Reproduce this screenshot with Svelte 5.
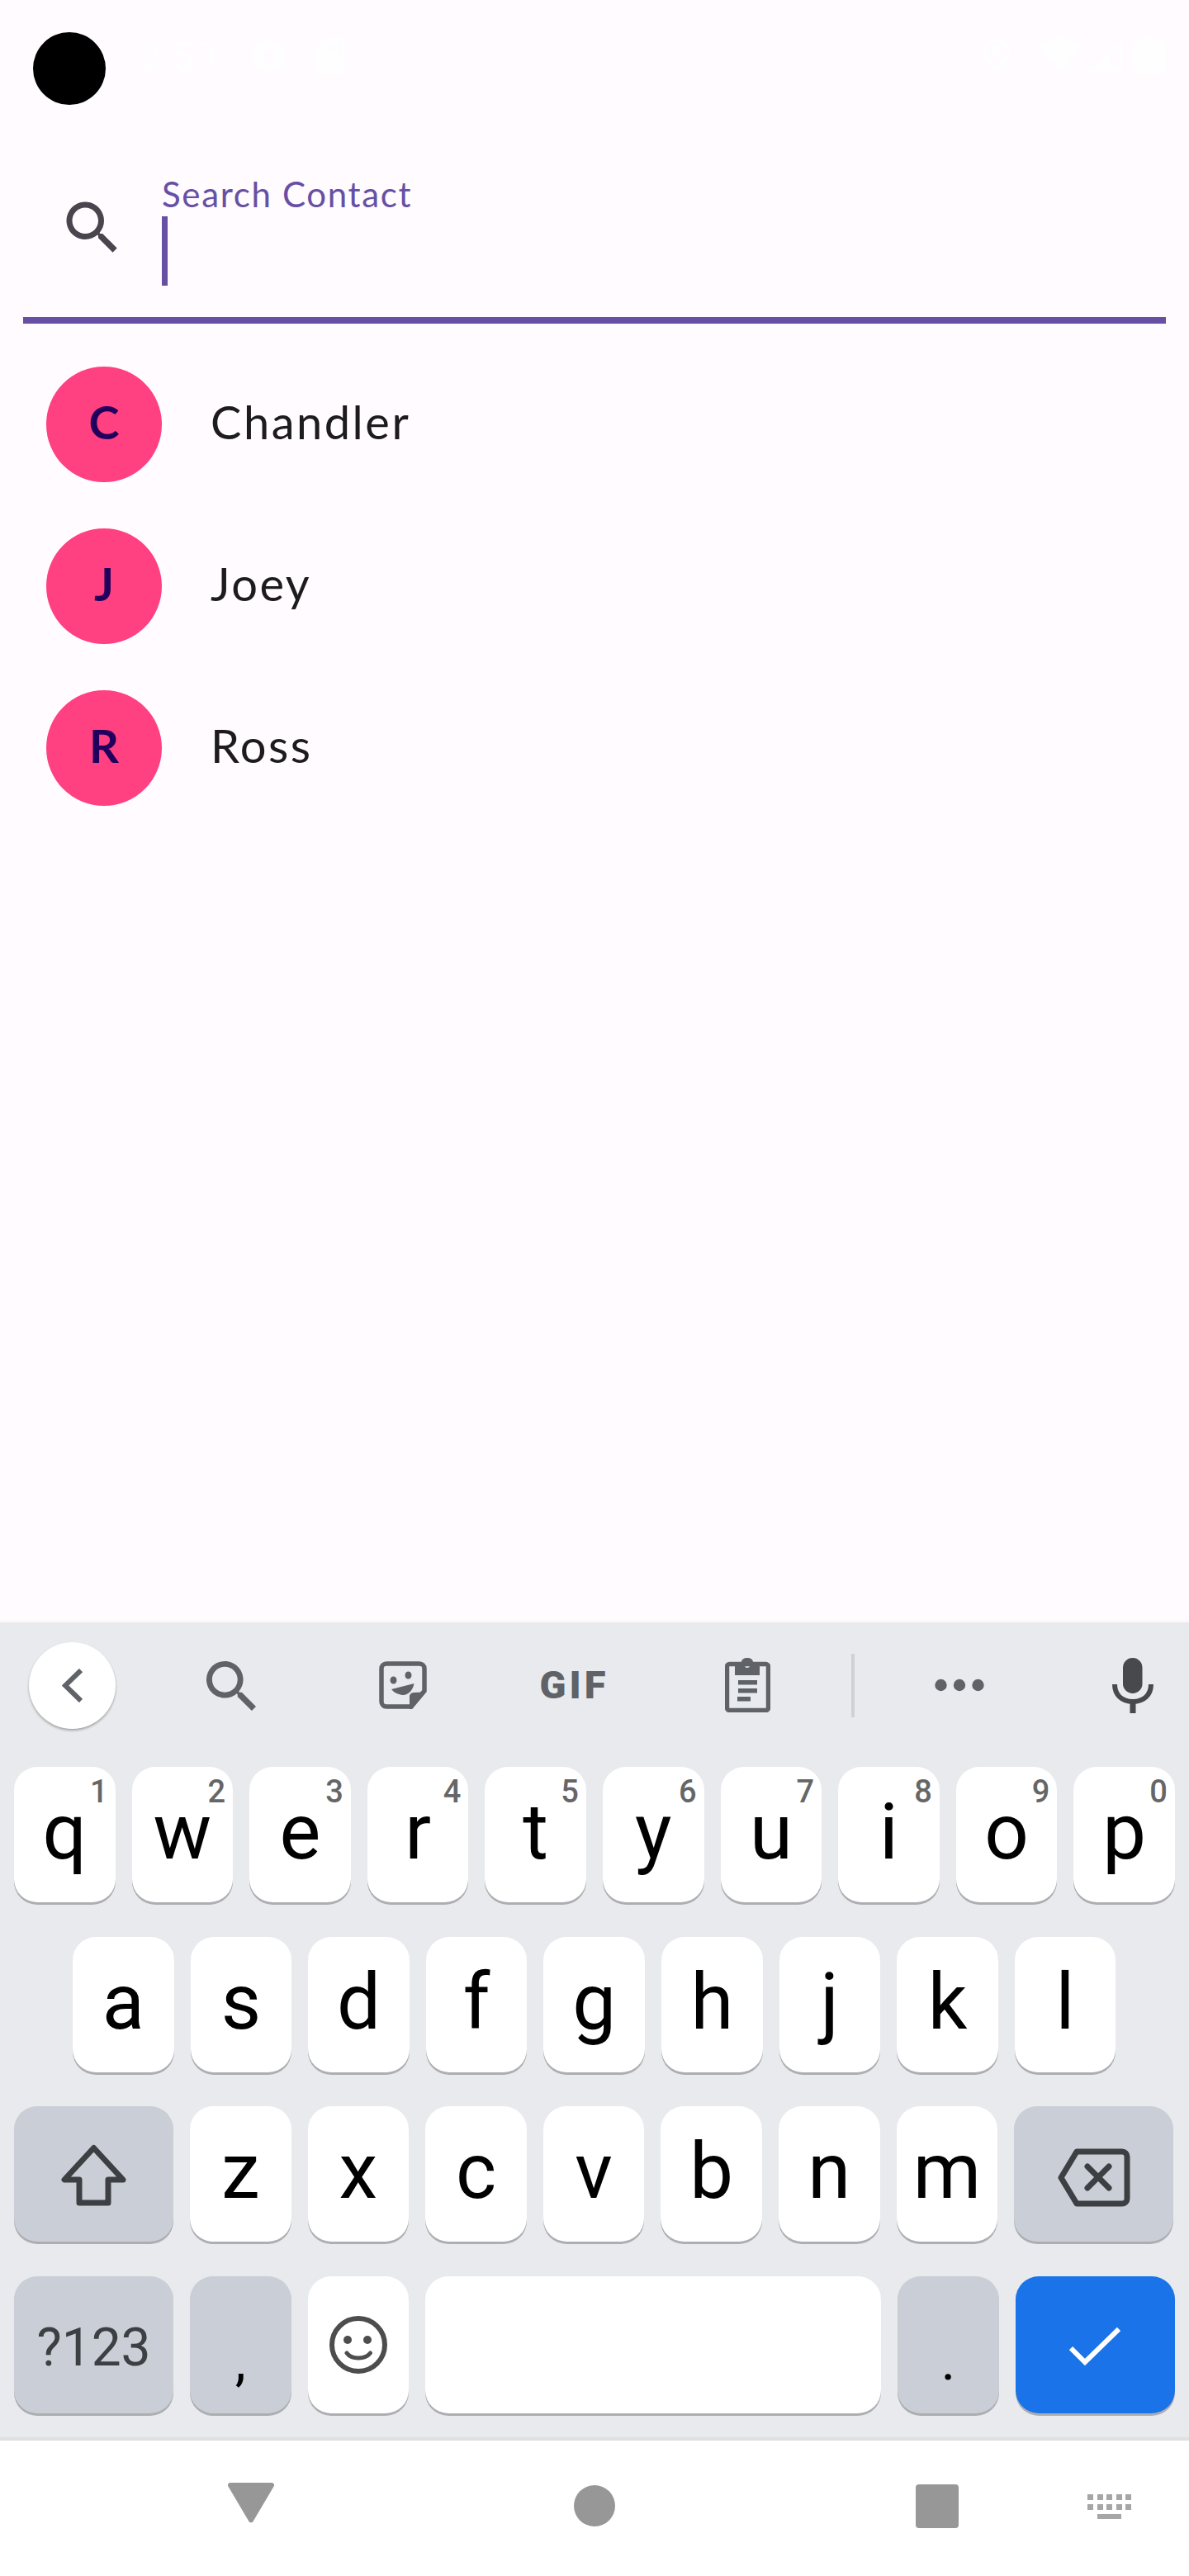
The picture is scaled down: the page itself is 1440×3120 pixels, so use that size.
<script>
  const contacts = [
    { initial: 'C', name: 'Chandler' },
    { initial: 'J', name: 'Joey' },
    { initial: 'R', name: 'Ross' }
  ];
  const row1 = [['q','1'],['w','2'],['e','3'],['r','4'],['t','5'],['y','6'],['u','7'],['i','8'],['o','9'],['p','0']];
  const row2 = ['a','s','d','f','g','h','j','k','l'];
  const row3 = ['z','x','c','v','b','n','m'];
  const searchPath = 'M15.5 14h-.79l-.28-.27C15.41 12.59 16 11.11 16 9.5 16 5.91 13.09 3 9.5 3S3 5.91 3 9.5 5.91 16 9.5 16c1.61 0 3.09-.59 4.23-1.57l.27.28v.79l5 4.99L20.49 19l-4.99-5zm-6 0C7.01 14 5 11.99 5 9.5S7.01 5 9.5 5 14 7.01 14 9.5 11.99 14 9.5 14z';
  const gearPath = 'M19.14 12.94c.04-.3.06-.61.06-.94 0-.32-.02-.64-.07-.94l2.03-1.58c.18-.14.23-.41.12-.61l-1.92-3.32c-.12-.22-.37-.29-.59-.22l-2.39.96c-.5-.38-1.03-.7-1.62-.94l-.36-2.54c-.04-.24-.24-.41-.48-.41h-3.84c-.24 0-.43.17-.47.41l-.36 2.54c-.59.24-1.13.57-1.62.94l-2.39-.96c-.22-.08-.47 0-.59.22L2.74 8.87c-.12.21-.08.47.12.61l2.03 1.58c-.05.3-.09.63-.09.94s.02.64.07.94l-2.03 1.58c-.18.14-.23.41-.12.61l1.92 3.32c.12.22.37.29.59.22l2.39-.96c.5.38 1.03.7 1.62.94l.36 2.54c.05.24.24.41.48.41h3.84c.24 0 .44-.17.47-.41l.36-2.54c.59-.24 1.13-.56 1.62-.94l2.39.96c.22.08.47 0 .59-.22l1.92-3.32c.12-.22.07-.47-.12-.61l-2.01-1.58zM12 15.6c-1.98 0-3.6-1.62-3.6-3.6s1.62-3.6 3.6-3.6 3.6 1.62 3.6 3.6-1.62 3.6-3.6 3.6z';
</script>

<div class="screen">
  <div class="camera"></div>

  <header class="status">
    <span class="time">2:53</span>
    <svg class="st-gear" viewBox="2.5 2 19 20"><path d={gearPath} /></svg>
    <svg class="st-sd" viewBox="0 0 35 44"><path fill-rule="evenodd" d="M14 0H31a4 4 0 0 1 4 4V40a4 4 0 0 1-4 4H4a4 4 0 0 1-4-4V14zM13 7h3v10h-3zM20 7h3v10h-3zM27 7h3v10h-3z" /></svg>
    <span class="st-space"></span>
    <svg class="st-loc" viewBox="0 0 32 40"><path fill-rule="evenodd" d="M16 0C7 0 0 7 0 15c0 9 10 20 16 25 6-5 16-16 16-25C32 7 25 0 16 0zM16 4c6 0 12 5 12 11 0 6-7 14-12 19C11 29 4 21 4 15 4 9 10 4 16 4zM16 9a6 6 0 1 0 0 12 6 6 0 0 0 0-12z" /></svg>
    <svg class="st-wifi" viewBox="0 0 52 43"><path d="M26 0C16 0 7 4 0 11L26 43 52 11C45 4 36 0 26 0z" /></svg>
    <svg class="st-signal" viewBox="0 0 43 42"><path fill-rule="evenodd" d="M43 0V42H0zM39 10 29 21V38H39z" /></svg>
    <svg class="st-battery" viewBox="0 0 40 45"><path d="M12 0H28V4H36a4 4 0 0 1 4 4V41a4 4 0 0 1-4 4H4a4 4 0 0 1-4-4V8a4 4 0 0 1 4-4H12z" /></svg>
  </header>

  <section class="field">
    <svg class="field-icon" viewBox="0 0 24 24"><path d={searchPath} /></svg>
    <div class="field-body">
      <span class="field-label">Search Contact</span>
      <span class="caret"></span>
    </div>
  </section>

  <ul class="list">
    {#each contacts as c}
      <li class="contact">
        <span class="avatar">{c.initial}</span>
        <span class="name">{c.name}</span>
      </li>
    {/each}
  </ul>

  <div class="spacer"></div>

  <section class="keyboard">
    <div class="toolbar">
      <button class="back" aria-label="back">
        <svg viewBox="0 0 26 41"><path d="M23 2 4 20.5 23 39" /></svg>
      </button>
      <svg class="t-search" viewBox="3 3 17.49 17.49"><path d={searchPath} /></svg>
      <svg class="t-sticker" viewBox="0 0 58 58">
        <path class="ol" d="M9 3H49a6 6 0 0 1 6 6V36L39 55H9a6 6 0 0 1-6-6V9a6 6 0 0 1 6-6z" />
        <path d="M57 37 40 58H37V44a5 5 0 0 1 5-6z" />
        <ellipse cx="17.5" cy="23" rx="4" ry="4.5" />
        <ellipse cx="35.5" cy="17" rx="4" ry="4.5" />
        <path d="M15 34 42.5 27C41 36 34 42 28 41 23 40 18 38 15 34z" />
      </svg>
      <span class="t-gif">GIF</span>
      <svg class="t-clip" viewBox="0 0 55 66">
        <rect class="ol" x="2.5" y="7.5" width="50" height="56" rx="3" />
        <path fill-rule="evenodd" d="M12 5H20C20 2 23 0 27 0s7 2 7 5H42V21H12zM27 6a3 3 0 1 0 0 6 3 3 0 0 0 0-6z" />
        <rect x="16" y="27" width="23" height="5.5" />
        <rect x="16" y="37" width="23" height="5.5" />
        <rect x="15" y="47" width="16" height="5.5" />
      </svg>
      <span class="t-div"></span>
      <svg class="t-dots" viewBox="0 0 60 16"><circle cx="7.5" cy="8" r="7.2" /><circle cx="30" cy="8" r="7.2" /><circle cx="52.5" cy="8" r="7.2" /></svg>
      <svg class="t-mic" viewBox="0 0 50 67">
        <rect x="13" y="0" width="23.5" height="43" rx="11.7" />
        <path class="ol" d="M3 32C3 45 12 53 25 53S47 45 47 32" />
        <rect x="21.5" y="52" width="7" height="15" />
      </svg>
    </div>

    <div class="rows">
      <div class="row">
        {#each row1 as [l, n]}
          <div class="key">{l}<span class="hint">{n}</span></div>
        {/each}
      </div>
      <div class="row row-inset">
        {#each row2 as l}
          <div class="key">{l}</div>
        {/each}
      </div>
      <div class="row">
        <div class="key wide fn">
          <svg class="i-shift" viewBox="0 0 79 76"><path d="M39.5 5.5 4 44H22V72H57V44H75z" /></svg>
        </div>
        {#each row3 as l}
          <div class="key">{l}</div>
        {/each}
        <div class="key wide fn">
          <svg class="i-back" viewBox="0 0 88 71">
            <path d="M23 4H78a6 6 0 0 1 6 6V61a6 6 0 0 1-6 6H23L4 35.500z" />
            <path class="x" d="M36 22 62 48M62 22 36 48" />
          </svg>
        </div>
      </div>
      <div class="row row-last">
        <div class="key wide fn sym">?123</div>
        <div class="key fn punct">,</div>
        <div class="key">
          <svg class="i-emoji" viewBox="0 0 70 70">
            <circle class="ol" cx="35" cy="35" r="32" />
            <circle cx="22" cy="29" r="5" /><circle cx="46" cy="29" r="5" />
            <path class="ol2" d="M21 45C27 53 43 53 49.500 45" />
          </svg>
        </div>
        <div class="key space"></div>
        <div class="key fn punct">.</div>
        <div class="key wide enter">
          <svg class="i-check" viewBox="0 0 62 47"><path d="M2 26 19 43 60 3" /></svg>
        </div>
      </div>
    </div>
  </section>

  <nav class="nav">
    <svg class="n-back" viewBox="0 0 56 49"><path d="M3 0H53a3 3 0 0 1 2.600 4.500L30.500 47a3 3 0 0 1-5 0L.4 4.500A3 3 0 0 1 3 0z" /></svg>
    <span class="n-home"></span>
    <span class="n-recent"></span>
    <svg class="n-kbd" viewBox="0 0 53 30">
      {#each [0, 12, 23, 35, 46] as x}
        <rect x={x} y="0" width="7" height="7" />
        <rect x={x} y="12" width="7" height="7" />
      {/each}
      <rect x="12" y="24" width="29" height="6" />
    </svg>
  </nav>
</div>

<style>
  :global(body) { margin: 0; background: #fffbfe; }
  * { box-sizing: border-box; }
  .screen {
    position: relative;
    width: 1440px;
    height: 3120px;
    display: flex;
    flex-direction: column;
    background: #fffbfe;
    overflow: hidden;
    font-family: Lato, "Noto Sans", sans-serif;
  }
  .camera {
    position: absolute;
    left: 40px; top: 39px;
    width: 88px; height: 88px;
    border-radius: 50%;
    background: #000;
  }
  .status {
    height: 112px;
    flex: none;
    display: flex;
    align-items: flex-start;
    padding-left: 168px;
    color: #fefefe;
    fill: #fefefe;
  }
  .time { font: 400 49px/58px Roboto, sans-serif; margin-top: 41px; width: 90px; }
  .st-gear { width: 44px; height: 44px; margin: 46px 0 0 45px; }
  .st-sd { width: 35px; height: 44px; margin: 46px 0 0 36px; }
  .st-space { flex: 1; }
  .st-loc { width: 32px; height: 40px; margin: 47px 0 0 0; }
  .st-wifi { width: 52px; height: 43px; margin: 45px 0 0 35px; }
  .st-signal { width: 43px; height: 42px; margin: 47px 0 0 6px; }
  .st-battery { width: 40px; height: 45px; margin: 45px 28px 0 13px; }

  .field {
    height: 280px;
    flex: none;
    margin: 0 28px;
    border-bottom: 8px solid #6750a4;
    display: flex;
    align-items: flex-start;
    padding-left: 41.5px;
  }
  .field-icon { width: 84px; height: 84px; margin-top: 121.5px; fill: #49454f; flex: none; }
  .field-body { display: flex; flex-direction: column; margin-left: 42.5px; padding-top: 98px; }
  .field-label {
    font-size: 42px;
    line-height: 50px;
    letter-spacing: 1.65px;
    color: #6750a4;
  }
  .caret { width: 7px; height: 84px; background: #6750a4; margin-top: 2px; }

  .list {
    list-style: none;
    margin: 0;
    padding: 52px 0 0 56px;
    display: flex;
    flex-direction: column;
    gap: 56px;
  }
  .contact { display: flex; align-items: center; height: 140px; }
  .avatar {
    width: 140px; height: 140px;
    border-radius: 50%;
    background: #ff4081;
    color: #21005d;
    font-size: 56px;
    font-weight: 700;
    display: flex;
    align-items: center;
    justify-content: center;
    padding-bottom: 8px;
  }
  .name {
    margin-left: 59px;
    padding-bottom: 8px;
    font-size: 56px;
    letter-spacing: 2.5px;
    color: #1c1b1f;
  }
  .spacer { flex: 1; }

  .keyboard {
    height: 991px;
    flex: none;
    background: #e8eaed;
    border-bottom: 4px solid #e0e0e0;
    box-shadow: 0 -3px 3px rgba(0,0,0,.02);
  }
  .toolbar {
    height: 152px;
    margin-bottom: 23px;
    display: flex;
    align-items: center;
    padding-left: 35px;
    fill: #5f6368;
  }
  .back {
    width: 105px; height: 105px;
    border-radius: 50%;
    border: 0; padding: 0;
    background: #fff;
    box-shadow: 0 2px 3px rgba(0,0,0,.3);
    display: flex;
    align-items: center;
    justify-content: center;
    flex: none;
  }
  .back svg { width: 26px; height: 41px; fill: none; stroke: #5f6368; stroke-width: 6; }
  .t-search { width: 60px; height: 60px; margin-left: 110px; margin-top: 2px; flex: none; }
  .t-sticker { width: 58px; height: 58px; margin-left: 149px; flex: none; }
  .t-sticker .ol, .t-clip .ol { fill: none; stroke: #5f6368; stroke-width: 5.5; }
  .t-gif {
    width: 85px;
    margin-left: 136px;
    flex: none;
    font: 900 47px/54px Roboto, sans-serif;
    letter-spacing: 4px;
    color: #5f6368;
    text-align: center;
    white-space: nowrap;
  }
  .t-clip { width: 55px; height: 66px; margin-left: 140px; flex: none; }
  .t-div { width: 4px; height: 77px; margin-left: 98px; background: #cfd1d6; flex: none; }
  .t-dots { width: 60px; height: 16px; margin-left: 97px; flex: none; }
  .t-mic { width: 50px; height: 67px; margin-left: 155px; fill: #47494d; flex: none; }
  .t-mic .ol { fill: none; stroke: #47494d; stroke-width: 6; }

  .rows { display: flex; flex-direction: column; gap: 41.7px; padding: 0 17px; }
  .row { display: flex; gap: 20px; }
  .row-inset { padding-left: 71px; }
  .key {
    position: relative;
    flex: none;
    width: 122.6px;
    height: 164px;
    border-radius: 28px;
    background: #fff;
    box-shadow: 0 3px 0 #adaeb2;
    display: flex;
    align-items: flex-start;
    justify-content: center;
    font: 400 94px/158px Roboto, sans-serif;
    color: #000;
  }
  .row-last .key { height: 166px; }
  .hint {
    position: absolute;
    right: 9px;
    top: 8px;
    font: 500 38px/44px Roboto, sans-serif;
    color: #666;
  }
  .wide { width: 193px; }
  .fn { background: #caced6; }
  .key.space { width: 552px; }
  .enter { background: #1a73e8; }
  .key.sym { font-size: 64px; line-height: 173px; color: #3c4043; }
  .key.punct { font-size: 66px; line-height: 206px; }
  .key svg { fill: none; stroke-linejoin: round; }
  .i-shift { width: 79px; height: 76px; margin-top: 45px; stroke: #3c4043; stroke-width: 7; }
  .i-back { width: 88px; height: 71px; margin-top: 51px; stroke: #3c4043; stroke-width: 7; }
  .i-back .x { stroke-width: 7; stroke-linecap: round; }
  .i-emoji { width: 70px; height: 70px; margin-top: 48px; }
  .i-emoji circle { fill: #4d4d4d; }
  .i-emoji .ol { fill: none; stroke: #4d4d4d; stroke-width: 6; }
  .i-emoji .ol2 { fill: none; stroke: #4d4d4d; stroke-width: 5; stroke-linecap: round; }
  .i-check { width: 62px; height: 47px; margin-top: 61px; stroke: #fff; stroke-width: 6; }
  .key .i-check { stroke-linejoin: miter; }

  .nav {
    height: 164px;
    flex: none;
    background: #fff;
    display: flex;
    align-items: flex-start;
    padding-left: 276px;
    fill: #979797;
  }
  .n-back { width: 56px; height: 49px; margin-top: 51px; flex: none; }
  .n-home { width: 50px; height: 50px; border-radius: 50%; background: #979797; margin: 54px 0 0 363px; flex: none; }
  .n-recent { width: 52px; height: 53px; border-radius: 4px; background: #979797; margin: 53px 0 0 364px; flex: none; }
  .n-kbd { width: 53px; height: 30px; margin: 65px 0 0 156px; flex: none; fill: #a6a6a6; }
</style>
